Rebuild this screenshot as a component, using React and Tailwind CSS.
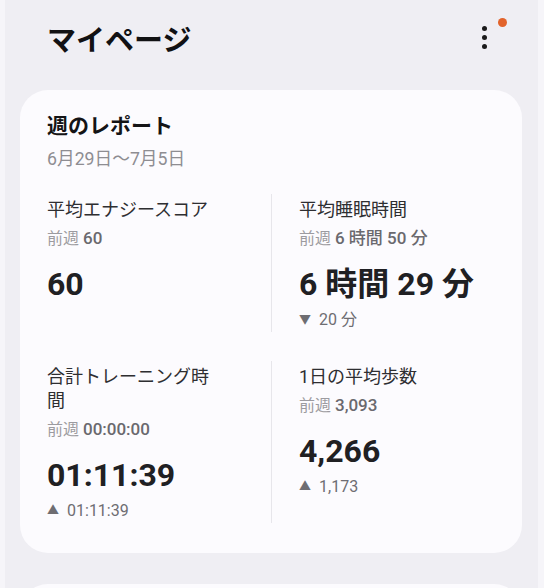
import React from "react";

function Sub({ value }) {
  return (
    <div className="mt-[5px] text-[16px] leading-[22px] whitespace-nowrap">
      <span className="text-[#9c9ba0]">前週 </span>
      <span className="text-[17px] text-[#6a696e] font-medium">{value}</span>
    </div>
  );
}

function Delta({ up, value }) {
  return (
    <div className="mt-[6px] flex items-center text-[16px] leading-[20px] text-[#6e6d72]">
      <span className="text-[12px] mr-[8px]">{up ? "▲" : "▼"}</span>
      <span>{value}</span>
    </div>
  );
}

function Cell({ label, sub, big, delta, up, right }) {
  return (
    <div
      className={
        right
          ? "border-l border-[#e7e6eb] pl-[27px] pt-[4px] pb-[2px]"
          : "pr-[52px] pt-[4px] pb-[2px]"
      }
    >
      <div className="text-[18px] leading-[24px] text-[#2e2e31]">{label}</div>
      <Sub value={sub} />
      <div className="mt-[14px] text-[32px] leading-[40px] font-bold text-[#202023] whitespace-nowrap">
        {big}
      </div>
      {delta && <Delta up={up} value={delta} />}
    </div>
  );
}

export default function App() {
  return (
    <div className="w-[544px] h-[588px] overflow-hidden bg-[#efeef3] flex font-[Roboto,'Noto_Sans_CJK_JP',sans-serif]">
      <div className="w-[5px] shrink-0 bg-[#f6f5f9]" />
      <div className="flex-1 flex flex-col">
        <div className="h-[90px] shrink-0 flex items-start">
          <div className="pl-[42px] pt-[21px] text-[29px] leading-[40px] font-bold text-[#111113] flex-1">
            マイページ
          </div>
          <div className="relative w-[40px] h-[60px] mr-[34px] mt-[26px] flex flex-col items-center gap-[4px]">
            <span className="w-[5px] h-[5px] rounded-full bg-[#1a1a1a]" />
            <span className="w-[5px] h-[5px] rounded-full bg-[#1a1a1a]" />
            <span className="w-[5px] h-[5px] rounded-full bg-[#1a1a1a]" />
            <span className="absolute left-[34px] top-[-8px] w-[9px] h-[9px] rounded-full bg-[#e2632b]" />
          </div>
        </div>
        <div className="shrink-0 ml-[15px] mr-[16px] rounded-[28px] bg-[#fcfbfe] pl-[27px] pr-[27px] pt-[22px] pb-[30px]">
          <div className="text-[21px] leading-[28px] font-bold text-[#141416]">週のレポート</div>
          <div className="mt-[8px] text-[17.7px] leading-[22px] text-[#8e8d92]">6月29日〜7月5日</div>
          <div className="mt-[24px] grid grid-cols-2 gap-y-[29px]">
            <Cell label="平均エナジースコア" sub="60" big="60" />
            <Cell right label="平均睡眠時間" sub="6 時間 50 分" big="6 時間 29 分" delta="20 分" up={false} />
            <Cell label="合計トレーニング時間" sub="00:00:00" big="01:11:39" delta="01:11:39" up />
            <Cell right label="1日の平均歩数" sub="3,093" big="4,266" delta="1,173" up />
          </div>
        </div>
        <div className="mt-[31px] ml-[15px] mr-[16px] h-[120px] shrink-0 rounded-[28px] bg-[#fcfbfe]" />
      </div>
      <div className="w-[6px] shrink-0 bg-[#f6f5f9]" />
    </div>
  );
}
